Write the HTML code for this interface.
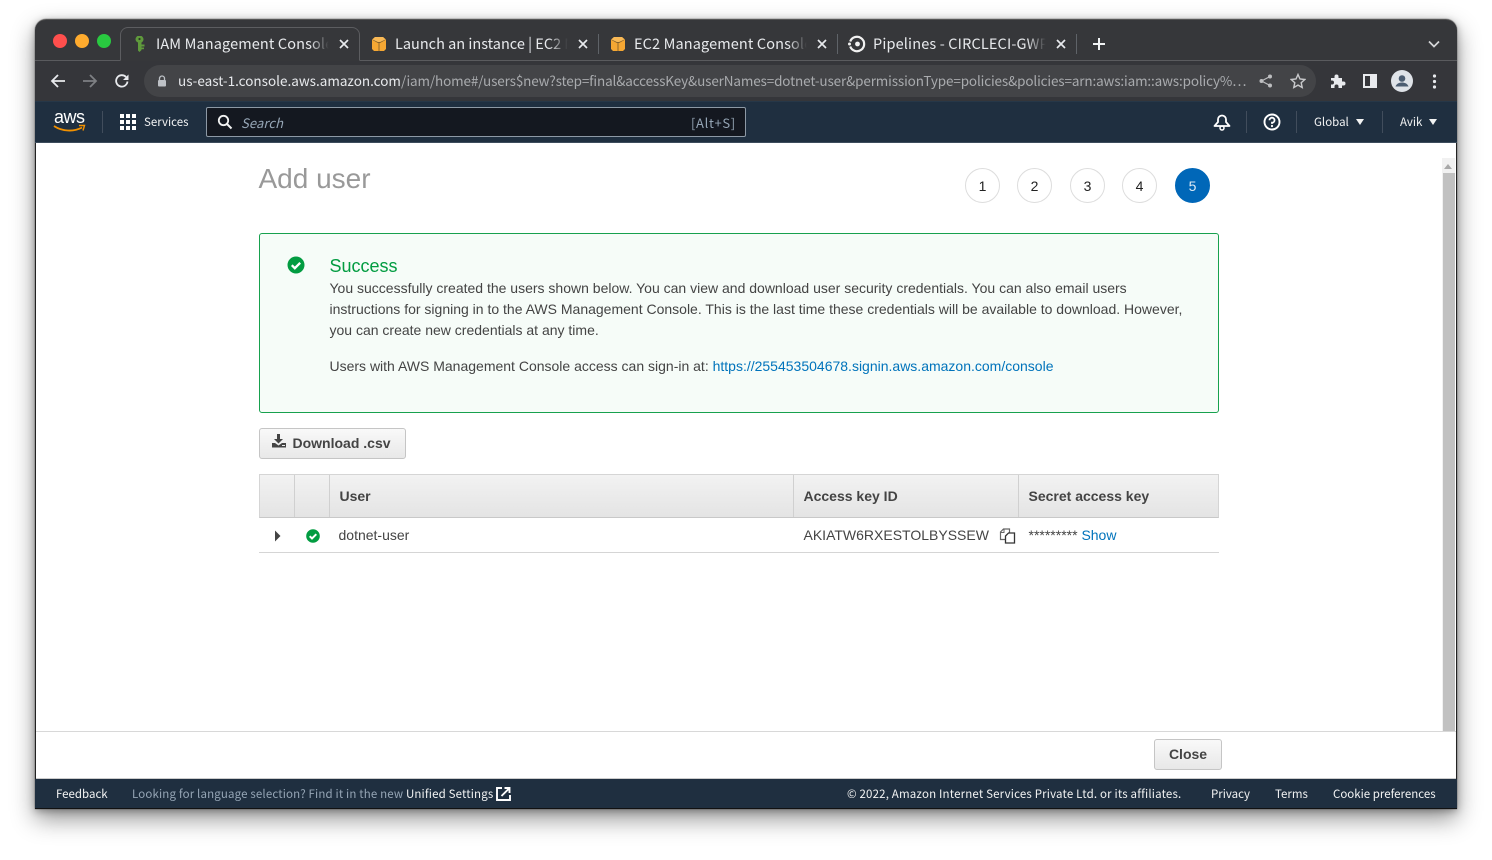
<!DOCTYPE html>
<html><head><meta charset="utf-8"><style>
html,body{margin:0;padding:0;width:1492px;height:860px;overflow:hidden;background:#fff}
body{position:relative;font-family:"Liberation Sans",sans-serif}
.a{position:absolute;white-space:nowrap}
#win{position:absolute;left:35px;top:19px;width:1422px;height:790px;border-radius:11px 11px 0 0;box-shadow:0 0 1px #222,0 10px 24px rgba(0,0,0,.42),0 2px 8px rgba(0,0,0,.3)}
.c{font-family:"Noto Sans CJK JP","Liberation Sans",sans-serif}
.tt{font-size:14.5px;color:#e8eaed;line-height:20px;top:34px;overflow:hidden}
.tt:after{content:"";position:absolute;right:0;top:0;width:22px;height:20px;background:linear-gradient(90deg,rgba(53,54,58,0),#36373a 85%)}
.n{font-family:"Noto Sans CJK JP","Liberation Sans",sans-serif;font-size:11.5px;color:#f2f3f3;line-height:16px}
.st{width:33px;height:33px;border:1px solid #ddd;border-radius:50%;top:168px;text-align:center;line-height:34px;font-size:14px;color:#222;background:#fff}
.p{font-size:14px;color:#444;line-height:21px;margin-left:-.5px}
.th{top:488px;font-size:14px;font-weight:bold;color:#444;line-height:16px;margin-left:-.5px}
.sep{width:1px;background:#5f6368}
.ns{width:1px;background:#414d5c}
</style></head><body>
<div id="win"></div>
<div class="a" style="left:35px;top:19px;width:1422px;height:43px;background:#36373a;border-radius:11px 11px 0 0;border-top:1px solid #555;box-sizing:border-box"></div>
<div class="a" style="left:35px;top:60px;width:1422px;height:1px;background:#5a5b5e"></div>
<div class="a" style="left:35px;top:61px;width:1422px;height:40px;background:#35363a"></div>
<!-- active tab -->
<div class="a" style="left:120px;top:27px;width:240px;height:34px;box-sizing:border-box;background:#36373a;border:1px solid #5c5d60;border-bottom:1px solid #36373a;border-radius:8px 8px 0 0"></div>
<div class="a" style="left:53px;top:34px;width:14px;height:14px;border-radius:50%;background:#ff4f4d"></div>
<div class="a" style="left:75px;top:34px;width:14px;height:14px;border-radius:50%;background:#ffab2e"></div>
<div class="a" style="left:97px;top:34px;width:14px;height:14px;border-radius:50%;background:#29c940"></div>
<svg class="a" style="left:134px;top:36px" width="14" height="17" viewBox="0 0 14 17"><path d="M1.500 3.500a4 4 0 0 1 8 0 4 4 0 0 1-2 3V14L5.500 16 4 14.500V6.500a4 4 0 0 1-2.500-3Z" fill="#5f9a3c"/><circle cx="5.500" cy="3" r="1.100" fill="#2d3a26"/><rect x="7.500" y="8.500" width="3" height="2" fill="#5f9a3c"/><rect x="7.500" y="11.500" width="2.500" height="1.700" fill="#5f9a3c"/></svg>
<div class="a c tt" style="left:156px;width:176px;letter-spacing:.12px">IAM Management Console</div>
<div class="a c tt" style="left:395px;width:176px">Launch an instance | EC2 Management</div>
<div class="a c tt" style="left:634px;width:176px;letter-spacing:.12px">EC2 Management Console</div>
<div class="a c tt" style="left:873px;width:176px;letter-spacing:.15px">Pipelines - CIRCLECI-GWP</div>
<svg class="a" style="left:339px;top:39px" width="10" height="10" viewBox="0 0 10 10"><path d="M1 1l8 8M9 1L1 9" stroke="#e8eaed" stroke-width="1.700"/></svg>
<svg class="a" style="left:578px;top:39px" width="10" height="10" viewBox="0 0 10 10"><path d="M1 1l8 8M9 1L1 9" stroke="#e8eaed" stroke-width="1.700"/></svg>
<svg class="a" style="left:817px;top:39px" width="10" height="10" viewBox="0 0 10 10"><path d="M1 1l8 8M9 1L1 9" stroke="#e8eaed" stroke-width="1.700"/></svg>
<svg class="a" style="left:1056px;top:39px" width="10" height="10" viewBox="0 0 10 10"><path d="M1 1l8 8M9 1L1 9" stroke="#e8eaed" stroke-width="1.700"/></svg>
<div class="a sep" style="left:598px;top:34px;height:20px"></div>
<div class="a sep" style="left:837px;top:34px;height:20px"></div>
<div class="a sep" style="left:1076px;top:34px;height:20px"></div>
<svg class="a" style="left:371px;top:36px" width="16" height="16" viewBox="0 0 16 16"><path d="M4 1h8l3 2.500v9.500l-2 2H3l-2-2V3.500Z" fill="#f5a733"/><path d="M1.500 3.500L7 6.500h2l5.500-3M8 6.500V15" fill="none" stroke="#5d4a2a" stroke-width=".9" opacity=".75"/><path d="M4 1h8l2.500 2.500L9 6H7L1.500 3.500Z" fill="#f9b956"/></svg>
<svg class="a" style="left:610px;top:36px" width="16" height="16" viewBox="0 0 16 16"><path d="M4 1h8l3 2.500v9.500l-2 2H3l-2-2V3.500Z" fill="#f5a733"/><path d="M1.500 3.500L7 6.500h2l5.500-3M8 6.500V15" fill="none" stroke="#5d4a2a" stroke-width=".9" opacity=".75"/><path d="M4 1h8l2.500 2.500L9 6H7L1.500 3.500Z" fill="#f9b956"/></svg>
<svg class="a" style="left:848px;top:35px" width="18" height="18" viewBox="0 0 18 18"><path d="M2.200 6.500A7.200 7.200 0 1 1 2.200 11.500" fill="none" stroke="#f1f1f1" stroke-width="2.200"/><circle cx="9.500" cy="9" r="2.400" fill="#f1f1f1"/><circle cx="1.500" cy="9" r="1.500" fill="#f1f1f1"/></svg>
<svg class="a" style="left:1092px;top:37px" width="14" height="14" viewBox="0 0 14 14"><path d="M7 1v12M1 7h12" stroke="#f1f3f4" stroke-width="2"/></svg>
<svg class="a" style="left:1428px;top:40px" width="12" height="8" viewBox="0 0 12 8"><path d="M1 1.500l5 5 5-5" fill="none" stroke="#d5d6d8" stroke-width="1.700"/></svg>
<!-- toolbar -->
<svg class="a" style="left:50px;top:73px" width="16" height="16" viewBox="0 0 16 16"><path d="M15 8H2M8 2L2 8l6 6" fill="none" stroke="#e8eaed" stroke-width="1.800"/></svg>
<svg class="a" style="left:82px;top:73px" width="16" height="16" viewBox="0 0 16 16"><path d="M1 8h13M8 2l6 6-6 6" fill="none" stroke="#7e8083" stroke-width="1.800"/></svg>
<svg class="a" style="left:114px;top:73px" width="16" height="16" viewBox="0 0 16 16"><path d="M13.500 8.500A5.700 5.700 0 1 1 12 4" fill="none" stroke="#e8eaed" stroke-width="1.800"/><path d="M14.500 1.500v5.500H9Z" fill="#e8eaed"/></svg>
<div class="a" style="left:144px;top:65px;width:1172px;height:32px;border-radius:16px;background:#434447"></div>
<svg class="a" style="left:157px;top:75px" width="10" height="12" viewBox="0 0 10 12"><path d="M2.500 5V3.500a2.500 2.500 0 0 1 5 0V5" fill="none" stroke="#bdc1c6" stroke-width="1.300"/><rect x="1" y="5" width="8" height="6.500" rx="1" fill="#bdc1c6"/></svg>
<div class="a c" style="left:178px;top:70px;width:1068px;overflow:hidden;font-size:13.5px;line-height:20px;color:#a9abae;letter-spacing:-.14px"><span style="color:#e8eaed;letter-spacing:0">us-east-1.console.aws.amazon.com</span>/iam/home#/users$new?step=final&amp;accessKey&amp;userNames=dotnet-user&amp;permissionType=policies&amp;policies=arn:aws:iam::aws:policy%…</div>
<svg class="a" style="left:1259px;top:74px" width="14" height="14" viewBox="0 0 14 14"><circle cx="11" cy="2.500" r="2" fill="#bdbec0"/><circle cx="11" cy="11.500" r="2" fill="#bdbec0"/><circle cx="2.500" cy="7" r="2" fill="#bdbec0"/><path d="M11 2.500L2.500 7l8.500 4.500" fill="none" stroke="#bdbec0" stroke-width="1.200"/></svg>
<svg class="a" style="left:1290px;top:73px" width="16" height="16" viewBox="0 0 16 16"><path d="M8 1.500l2 4.500 4.800.5-3.600 3.200 1 4.800L8 12.100l-4.200 2.400 1-4.800L1.200 6.500 6 6Z" fill="none" stroke="#c9cacc" stroke-width="1.400"/></svg>
<svg class="a" style="left:1330px;top:73px" width="16" height="16" viewBox="0 0 16 16"><path d="M1 5h3.500V3.500a2 2 0 0 1 4 0V5H12v3.500h1.500a2 2 0 0 1 0 4H12V15H8.500v-1.500a2 2 0 0 0-4 0V15H1v-3.500h1a2 2 0 0 0 0-4H1Z" fill="#e8eaed"/></svg>
<div class="a" style="left:1363px;top:74px;width:14px;height:14px;box-sizing:border-box;border:2px solid #e8eaed;border-left-width:7px;background:#35363a;transform:scaleX(-1)"></div>
<svg class="a" style="left:1391px;top:70px" width="22" height="22" viewBox="0 0 22 22"><circle cx="11" cy="11" r="11" fill="#dfe3e8"/><circle cx="11" cy="8.500" r="3.300" fill="#4c5d71"/><path d="M4.500 16.500c1-3 4-4 6.500-4s5.500 1 6.500 4Z" fill="#4c5d71"/></svg>
<svg class="a" style="left:1432px;top:74px" width="5" height="15" viewBox="0 0 5 15"><circle cx="2.500" cy="2" r="1.600" fill="#e8eaed"/><circle cx="2.500" cy="7.500" r="1.600" fill="#e8eaed"/><circle cx="2.500" cy="13" r="1.600" fill="#e8eaed"/></svg>
<!-- aws nav -->
<div class="a" style="left:35px;top:101px;width:1422px;height:42px;background:#1f2f40;border-top:1px solid #263748;border-bottom:1px solid #3d4c5c;box-sizing:border-box"></div>
<div class="a" style="left:54px;top:107px;font:500 18px/20px 'Liberation Sans',sans-serif;color:#fff;letter-spacing:-.5px">aws</div>
<svg class="a" style="left:53px;top:124px" width="33" height="9" viewBox="0 0 33 9"><path d="M1 2c8 5.500 20 6 28 1.500" fill="none" stroke="#f29100" stroke-width="1.800"/><path d="M26 1.500h5.500L30 6.500" fill="none" stroke="#f29100" stroke-width="1.400"/></svg>
<div class="a ns" style="left:102px;top:111px;height:22px"></div>
<svg class="a" style="left:120px;top:114px" width="16" height="16" viewBox="0 0 16 16" fill="#fff"><rect width="4" height="4"/><rect x="6" width="4" height="4"/><rect x="12" width="4" height="4"/><rect y="6" width="4" height="4"/><rect x="6" y="6" width="4" height="4"/><rect x="12" y="6" width="4" height="4"/><rect y="12" width="4" height="4"/><rect x="6" y="12" width="4" height="4"/><rect x="12" y="12" width="4" height="4"/></svg>
<div class="a n" style="left:144px;top:114px">Services</div>
<div class="a" style="left:206px;top:107px;width:540px;height:30px;box-sizing:border-box;background:#141820;border:1px solid #8d99a5;border-radius:2px"></div>
<svg class="a" style="left:217px;top:114px" width="16" height="16" viewBox="0 0 16 16"><circle cx="6.500" cy="6.500" r="4.700" fill="none" stroke="#f2f3f3" stroke-width="1.800"/><path d="M10 10l4.500 4.500" stroke="#f2f3f3" stroke-width="2"/></svg>
<div class="a c" style="left:241px;top:114px;font-size:13px;font-style:italic;line-height:18px;color:#95a5b5;letter-spacing:.1px">Search</div>
<div class="a c" style="left:691px;top:114px;font-size:13px;line-height:18px;color:#95a5b5;letter-spacing:.65px">[Alt+S]</div>
<svg class="a" style="left:1213px;top:113px" width="18" height="18" viewBox="0 0 18 18"><path d="M1.500 13L5 9V6.500a4 4 0 0 1 8 0V9l3.500 4Z" fill="none" stroke="#fff" stroke-width="1.800" stroke-linejoin="round"/><circle cx="9" cy="15" r="2" fill="none" stroke="#fff" stroke-width="1.500"/></svg>
<div class="a ns" style="left:1246px;top:111px;height:22px"></div>
<svg class="a" style="left:1263px;top:113px" width="18" height="18" viewBox="0 0 18 18"><circle cx="9" cy="9" r="7.500" fill="none" stroke="#fff" stroke-width="1.900"/><path d="M6.500 7.200A2.500 2.500 0 1 1 9 9.700v1.200" fill="none" stroke="#fff" stroke-width="1.800"/><circle cx="9" cy="13" r="1.100" fill="#fff"/></svg>
<div class="a ns" style="left:1296px;top:111px;height:22px"></div>
<div class="a n" style="left:1314px;top:114px">Global</div>
<svg class="a" style="left:1356px;top:119px" width="8" height="6"><path d="M0 0h8L4 6Z" fill="#f2f3f3"/></svg>
<div class="a ns" style="left:1382px;top:111px;height:22px"></div>
<div class="a n" style="left:1400px;top:114px">Avik</div>
<svg class="a" style="left:1429px;top:119px" width="8" height="6"><path d="M0 0h8L4 6Z" fill="#f2f3f3"/></svg>
<!-- content -->
<div class="a" style="left:36px;top:143px;width:1420px;height:636px;background:#fff"></div>
<div class="a" style="left:35px;top:143px;width:1px;height:636px;background:#222"></div>
<div class="a" style="left:1456px;top:143px;width:1px;height:636px;background:#222"></div>
<div class="a" style="left:1442px;top:158px;width:13px;height:573px;background:#f1f1f1"></div>
<div class="a" style="left:1443px;top:173px;width:12px;height:558px;background:#c1c1c1"></div>
<svg class="a" style="left:1444px;top:164px" width="9" height="5"><path d="M0 5h8L4 0Z" fill="#a8a8a8"/></svg>
<div class="a" style="left:258.500px;top:162px;font-size:28px;line-height:34px;color:#999">Add user</div>
<div class="a st" style="left:965px">1</div>
<div class="a st" style="left:1017px">2</div>
<div class="a st" style="left:1070px">3</div>
<div class="a st" style="left:1122px">4</div>
<div class="a st" style="left:1175px;background:#0067b8;border-color:#0067b8;color:#ddeaf5">5</div>
<div class="a" style="left:259px;top:233px;width:960px;height:180px;box-sizing:border-box;background:#f6fcf8;border:1px solid #17a14e;border-radius:3px"></div>
<svg class="a" style="left:287px;top:256px" width="18" height="18" viewBox="0 0 18 18"><circle cx="9" cy="9" r="8.500" fill="#029c41"/><path d="M4.800 9.200l3 3 5.400-5.400" fill="none" stroke="#fff" stroke-width="2.300"/></svg>
<div class="a" style="left:329.500px;top:255px;font-size:18px;line-height:22px;color:#029c41">Success</div>
<div class="a p" style="left:330px;top:278px">You successfully created the users shown below. You can view and download user security credentials. You can also email users</div>
<div class="a p" style="left:330px;top:299px">instructions for signing in to the AWS Management Console. This is the last time these credentials will be available to download. However,</div>
<div class="a p" style="left:330px;top:320px">you can create new credentials at any time.</div>
<div class="a p" style="left:330px;top:356px">Users with AWS Management Console access can sign-in at: <span style="color:#0073bb">https://255453504678.signin.aws.amazon.com/console</span></div>
<div class="a" style="left:259px;top:428px;width:147px;height:31px;box-sizing:border-box;border:1px solid #c5c5c5;border-radius:3px;background:linear-gradient(#f9f9f9,#e8e8e8)"></div>
<svg class="a" style="left:271px;top:434px" width="16" height="15" viewBox="0 0 16 15"><path d="M6 0h3v5h3L7.500 9.500 3 5h3Z" fill="#444"/><path d="M1 9h3l3.500 2.500L11 9h4v4.500H1Z" fill="#444"/><rect x="11" y="11" width="3" height="1" fill="#eee"/></svg>
<div class="a" style="left:292.500px;top:435px;font-size:14px;font-weight:bold;line-height:16px;color:#444">Download .csv</div>
<div class="a" style="left:259px;top:474px;width:960px;height:44px;box-sizing:border-box;border:1px solid #d5d5d5;border-bottom:1px solid #c8c8c8;background:linear-gradient(#f2f2f2,#e4e4e4)"></div>
<div class="a" style="left:294px;top:475px;width:1px;height:42px;background:#d0d0d0"></div>
<div class="a" style="left:329px;top:475px;width:1px;height:42px;background:#d0d0d0"></div>
<div class="a" style="left:793px;top:475px;width:1px;height:42px;background:#d0d0d0"></div>
<div class="a" style="left:1018px;top:475px;width:1px;height:42px;background:#d0d0d0"></div>
<div class="a th" style="left:340px">User</div>
<div class="a th" style="left:804px">Access key ID</div>
<div class="a th" style="left:1029px">Secret access key</div>
<svg class="a" style="left:274px;top:530px" width="7" height="12"><path d="M1 .5L6.500 6 1 11.500Z" fill="#444"/></svg>
<svg class="a" style="left:306px;top:529px" width="14" height="14" viewBox="0 0 14 14"><circle cx="7" cy="7" r="6.800" fill="#029c41"/><path d="M3.700 7.200l2.300 2.300 4.300-4.300" fill="none" stroke="#fff" stroke-width="2"/></svg>
<div class="a p" style="left:339px;top:525px">dotnet-user</div>
<div class="a p" style="left:804px;top:525px">AKIATW6RXESTOLBYSSEW</div>
<svg class="a" style="left:998.500px;top:528px" width="17" height="16" viewBox="0 0 17 16"><path d="M6.500 11.500H1.500V4L4.500 1H10.500V5" fill="none" stroke="#666" stroke-width="1.200"/><path d="M1.500 4.500H5V1" fill="none" stroke="#666" stroke-width="1"/><path d="M6.500 8L9.500 5H15.500V15H6.500Z" fill="#fff" stroke="#333" stroke-width="1.300"/></svg>
<div class="a p" style="left:1029px;top:525px">********* <span style="color:#0073bb">Show</span></div>
<div class="a" style="left:259px;top:552px;width:960px;height:1px;background:#d5d5d5"></div>
<!-- bottom -->
<div class="a" style="left:36px;top:731px;width:1420px;height:1px;background:#d8d8d8"></div>
<div class="a" style="left:1154px;top:739px;width:68px;height:31px;box-sizing:border-box;border:1px solid #c5c5c5;border-radius:3px;background:linear-gradient(#f9f9f9,#e8e8e8);text-align:center;font-size:14px;font-weight:bold;line-height:28px;color:#444">Close</div>
<div class="a" style="left:36px;top:778px;width:1420px;height:1px;background:#ccc"></div>
<div class="a" style="left:35px;top:779px;width:1422px;height:30px;background:#1f2f40;border-bottom:1px solid #111;box-sizing:border-box"></div>
<div class="a n" style="left:56px;top:786px">Feedback</div>
<div class="a n" style="left:132px;top:786px;color:#95a5b5;letter-spacing:.15px">Looking for language selection? Find it in the new <span style="color:#f2f3f3">Unified Settings</span></div>
<svg class="a" style="left:496px;top:787px" width="15" height="14" viewBox="0 0 15 14"><path d="M6 1H1v12h13V8" fill="none" stroke="#fff" stroke-width="1.900"/><path d="M5.500 9l7-7M8.500 1h5v5" fill="none" stroke="#fff" stroke-width="1.900"/></svg>
<div class="a n" style="left:847px;top:786px;letter-spacing:.17px">© 2022, Amazon Internet Services Private Ltd. or its affiliates.</div>
<div class="a n" style="left:1211px;top:786px">Privacy</div>
<div class="a n" style="left:1275px;top:786px">Terms</div>
<div class="a n" style="left:1333px;top:786px">Cookie preferences</div>
</body></html>
